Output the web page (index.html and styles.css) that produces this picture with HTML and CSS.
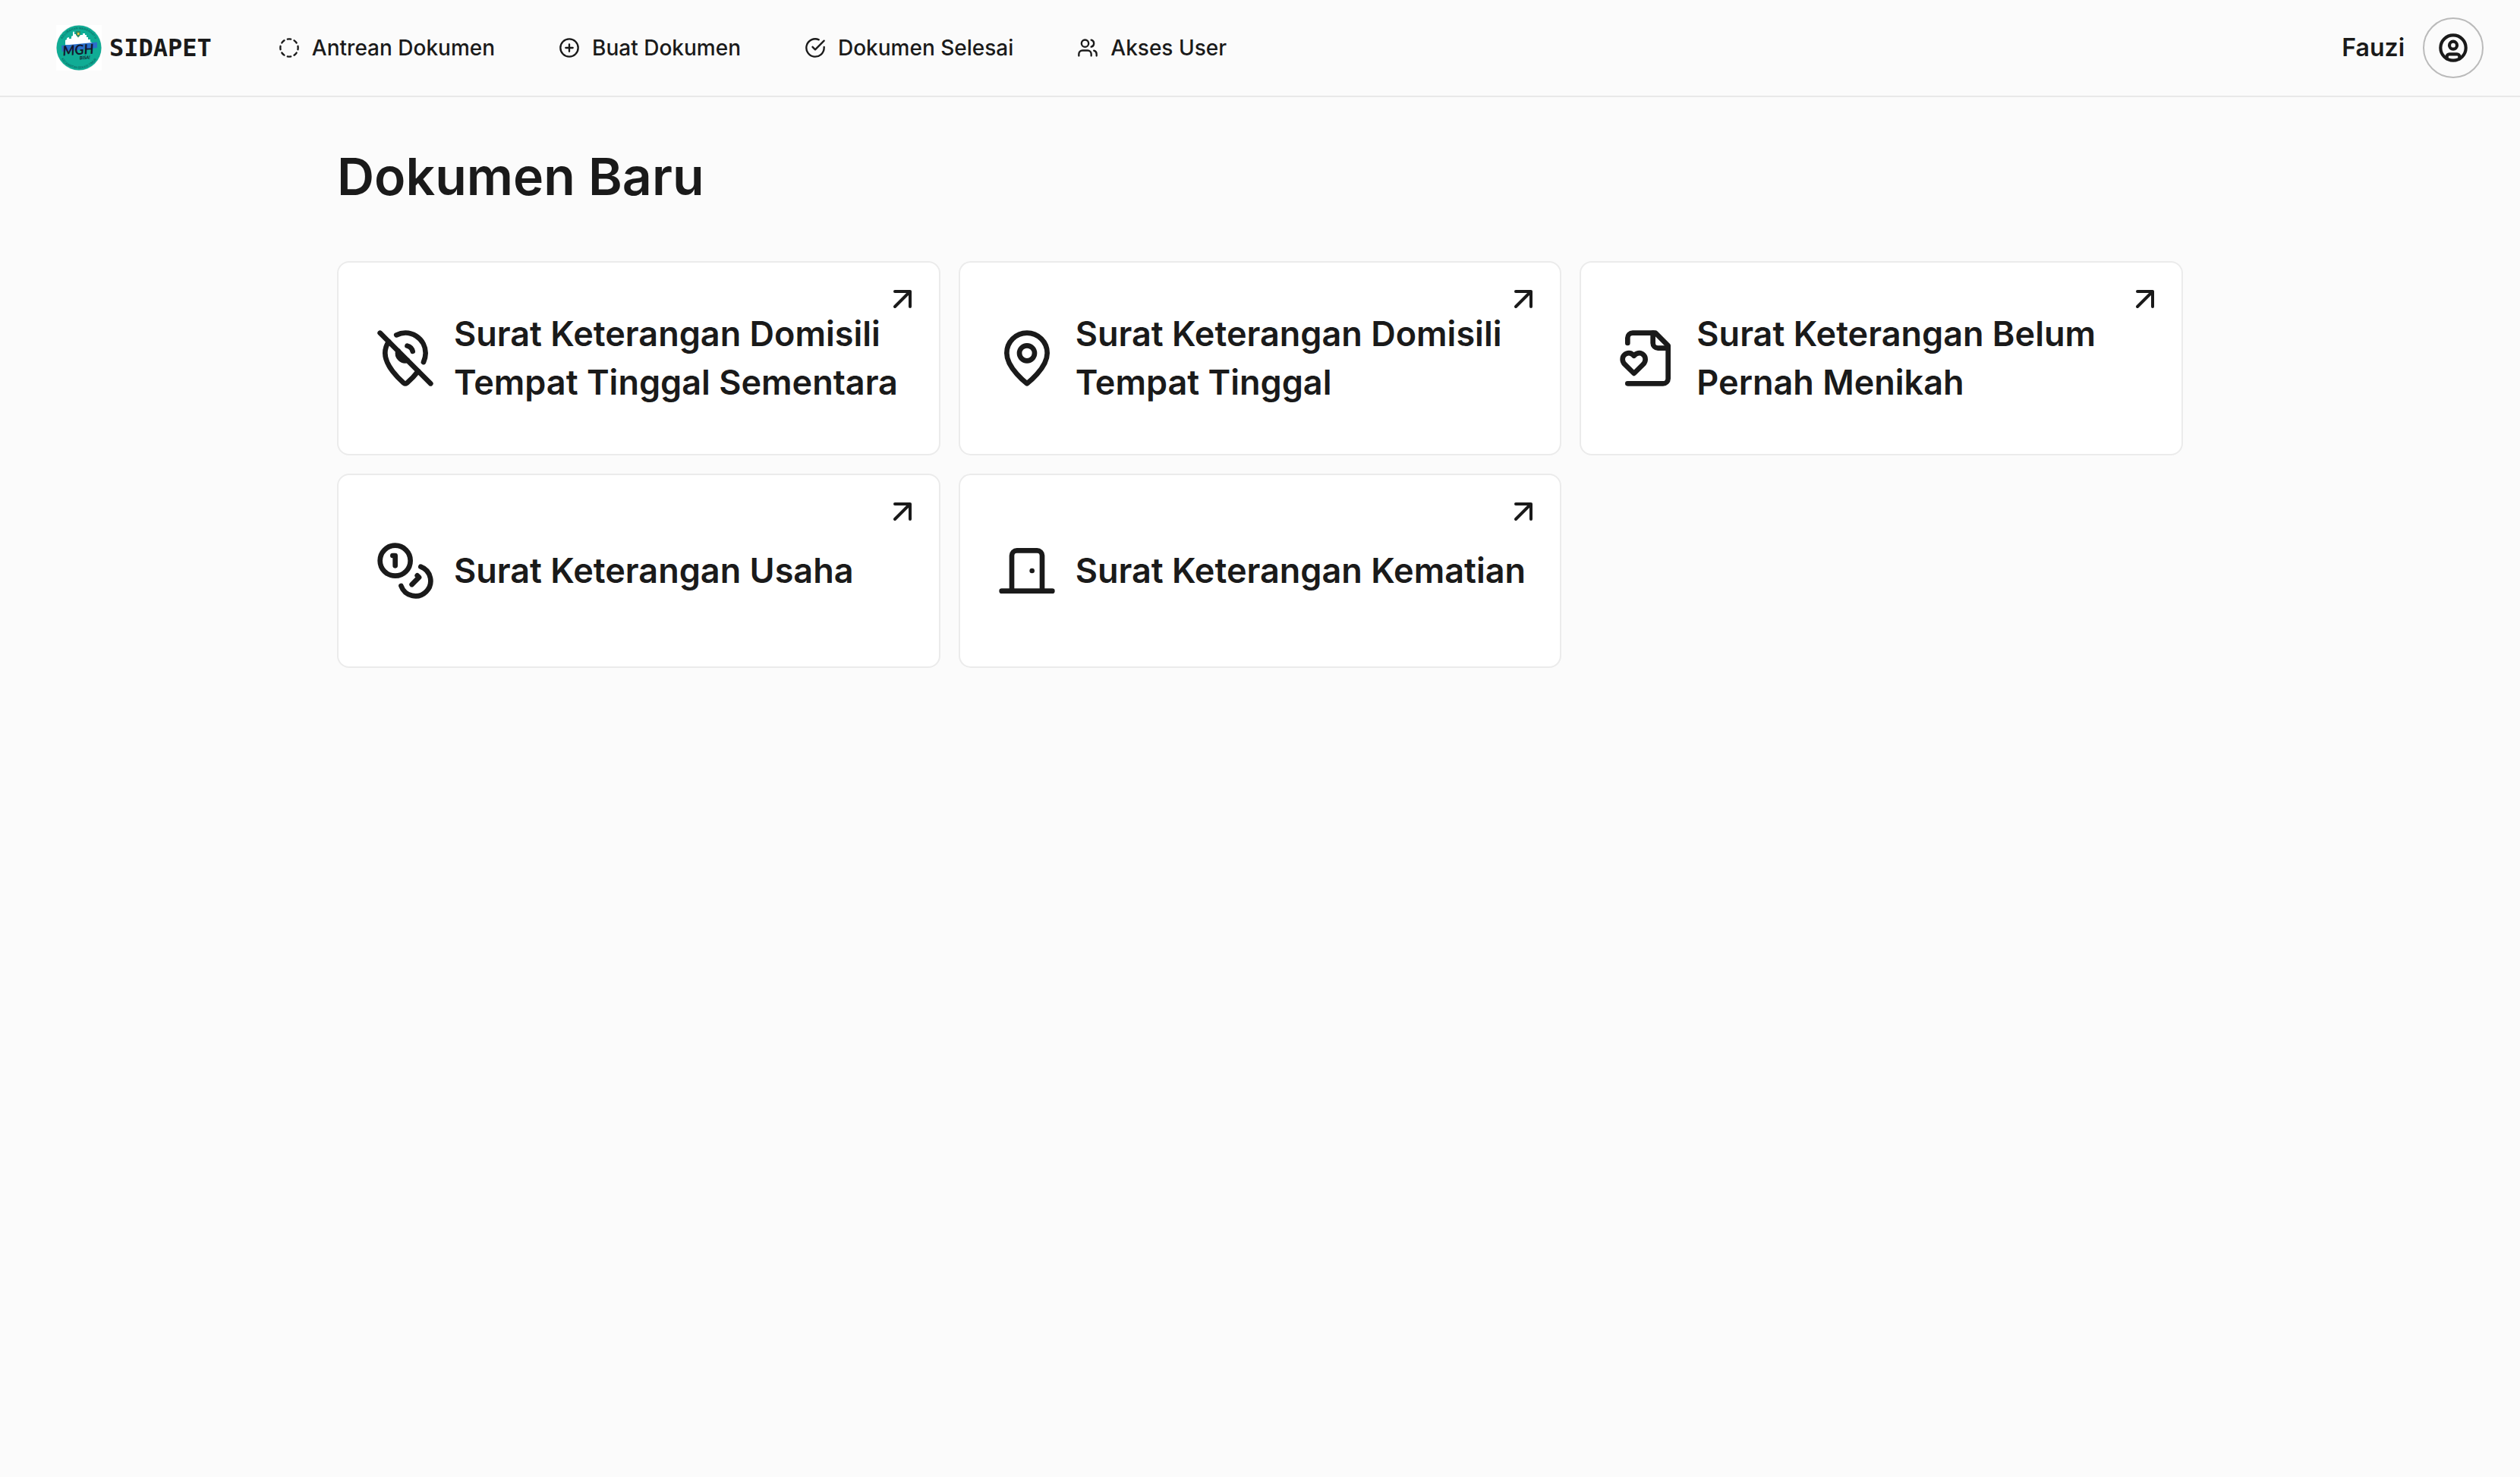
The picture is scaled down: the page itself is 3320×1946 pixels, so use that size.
FILE: index.html
```html
<!DOCTYPE html>
<html lang="id">
<head>
<meta charset="utf-8">
<meta name="viewport" content="width=device-width, initial-scale=1">
<title>SIDAPET - Dokumen Baru</title>
<link rel="stylesheet" href="styles.css">
</head>
<body>
<header class="topbar">
  <a class="brand" href="#">
    <svg class="brand-logo" viewBox="0 0 60 60" aria-hidden="true">
      <defs>
        <path id="ring-top" d="M5.500 30a24.500 24.500 0 0 1 49 0"/>
        <path id="ring-bottom" d="M2.500 30a27.500 27.500 0 0 0 55 0"/>
      </defs>
      <rect width="60" height="60" fill="#fff"/>
      <circle cx="30" cy="30" r="30" fill="#dfe9e7"/>
      <circle cx="30" cy="30" r="29.500" fill="#10ac95"/>
      <text class="logo-ring"><textPath href="#ring-top" startOffset="50%">KELURAHAN MARGAHAYU</textPath></text>
      <text class="logo-ring"><textPath href="#ring-bottom" startOffset="50%">KECAMATAN BEKASI TIMUR</textPath></text>
      <path d="M12 26v-6l2-1v-2l3-1v2h3v-3l2-1v-4l1-2 1 2v2h3v-1h5v2h3v-2h3v2h2v3h2v3h3v3l2 1v5z" fill="#fff"/>
      <path d="M26 8h6v5l-3 3.500-3-3.500z" fill="#2f8a63"/>
      <path d="M28 10h2.500v3H28z" fill="#e6c644"/>
      <path d="M7 27l47-4.500v7.500l-46 5z" fill="#2c6fc9"/>
      <text class="logo-name" x="29" y="39" transform="rotate(-4 29 34)">MGH</text>
      <text class="logo-sub" x="38" y="45" transform="rotate(-4 38 45)">BISA!</text>
    </svg>
    <span class="brand-name">SIDAPET</span>
  </a>
  <nav class="nav" aria-label="Menu utama">
    <a class="nav-link" href="#">
      <svg class="icon icon-sm" viewBox="0 0 24 24" aria-hidden="true"><path d="M10.100 2.182a10 10 0 0 1 3.800 0M13.900 21.818a10 10 0 0 1-3.800 0M17.609 3.721a10 10 0 0 1 2.690 2.700M2.182 13.900a10 10 0 0 1 0-3.800M20.279 17.609a10 10 0 0 1-2.700 2.690M21.818 10.100a10 10 0 0 1 0 3.800M3.721 6.391a10 10 0 0 1 2.700-2.690M6.391 20.279a10 10 0 0 1-2.690-2.700"/></svg>
      Antrean Dokumen
    </a>
    <a class="nav-link" href="#">
      <svg class="icon icon-sm" viewBox="0 0 24 24" aria-hidden="true"><circle cx="12" cy="12" r="10"/><path d="M8 12h8M12 8v8"/></svg>
      Buat Dokumen
    </a>
    <a class="nav-link" href="#">
      <svg class="icon icon-sm" viewBox="0 0 24 24" aria-hidden="true"><path d="M22 11.080V12a10 10 0 1 1-5.930-9.140"/><path d="m9 11 3 3L22 4"/></svg>
      Dokumen Selesai
    </a>
    <a class="nav-link" href="#">
      <svg class="icon icon-sm" viewBox="0 0 24 24" aria-hidden="true"><path d="M16 21v-2a4 4 0 0 0-4-4H6a4 4 0 0 0-4 4v2"/><circle cx="9" cy="7" r="4"/><path d="M22 21v-2a4 4 0 0 0-3-3.870M16 3.130a4 4 0 0 1 0 7.750"/></svg>
      Akses User
    </a>
  </nav>
  <div class="account">
    <span class="account-name">Fauzi</span>
    <button class="account-button" type="button" aria-label="Akun">
      <svg class="icon icon-md" viewBox="0 0 24 24" aria-hidden="true"><circle cx="12" cy="12" r="10"/><circle cx="12" cy="10" r="3"/><path d="M7 20.662V19a2 2 0 0 1 2-2h6a2 2 0 0 1 2 2v1.662"/></svg>
    </button>
  </div>
</header>
<main class="page">
  <h1 class="page-title">Dokumen Baru</h1>
  <div class="cards">
    <a class="card" href="#">
      <svg class="icon icon-xl" viewBox="0 0 24 24" aria-hidden="true"><path d="M12.750 7.090a3 3 0 0 1 2.160 2.160"/><path d="M17.072 17.072c-1.634 2.170-3.527 3.912-4.471 4.727a1 1 0 0 1-1.202 0C9.539 20.193 4 14.993 4 10a8 8 0 0 1 1.432-4.568"/><path d="m2 2 20 20"/><path d="M8.475 2.818A8 8 0 0 1 20 10c0 1.183-.310 2.377-.810 3.533"/><path d="M9.130 9.130a3 3 0 0 0 3.740 3.740"/></svg>
      <span class="card-title">Surat Keterangan Domisili Tempat Tinggal Sementara</span>
      <svg class="icon icon-lg card-arrow" viewBox="0 0 24 24" aria-hidden="true"><path d="M7 7h10v10M7 17 17 7"/></svg>
    </a>
    <a class="card" href="#">
      <svg class="icon icon-xl" viewBox="0 0 24 24" aria-hidden="true"><path d="M20 10c0 6-8 12-8 12s-8-6-8-12a8 8 0 0 1 16 0Z"/><circle cx="12" cy="10" r="3"/></svg>
      <span class="card-title">Surat Keterangan Domisili Tempat Tinggal</span>
      <svg class="icon icon-lg card-arrow" viewBox="0 0 24 24" aria-hidden="true"><path d="M7 7h10v10M7 17 17 7"/></svg>
    </a>
    <a class="card" href="#">
      <svg class="icon icon-xl" viewBox="0 0 24 24" aria-hidden="true"><path d="M4 22h14a2 2 0 0 0 2-2V7l-5-5H6a2 2 0 0 0-2 2v2"/><path d="M14 2v4a2 2 0 0 0 2 2h4"/><path d="M10.290 10.700a2.430 2.430 0 0 0-2.660-.520c-.290.120-.560.300-.780.530l-.350.340-.350-.340a2.430 2.430 0 0 0-2.650-.530c-.300.120-.560.300-.790.530-.950.940-1 2.530.200 3.740L6.500 18l3.600-3.550c1.200-1.210 1.140-2.800.190-3.740Z"/></svg>
      <span class="card-title">Surat Keterangan Belum Pernah Menikah</span>
      <svg class="icon icon-lg card-arrow" viewBox="0 0 24 24" aria-hidden="true"><path d="M7 7h10v10M7 17 17 7"/></svg>
    </a>
    <a class="card" href="#">
      <svg class="icon icon-xl" viewBox="0 0 24 24" aria-hidden="true"><circle cx="8" cy="8" r="6"/><path d="M18.090 10.370A6 6 0 1 1 10.340 18M7 6h1v4M16.710 13.880l.700.710-2.820 2.820"/></svg>
      <span class="card-title">Surat Keterangan Usaha</span>
      <svg class="icon icon-lg card-arrow" viewBox="0 0 24 24" aria-hidden="true"><path d="M7 7h10v10M7 17 17 7"/></svg>
    </a>
    <a class="card" href="#">
      <svg class="icon icon-xl" viewBox="0 0 24 24" aria-hidden="true"><path d="M18 20V6a2 2 0 0 0-2-2H8a2 2 0 0 0-2 2v14M2 20h20M14 12v.010"/></svg>
      <span class="card-title">Surat Keterangan Kematian</span>
      <svg class="icon icon-lg card-arrow" viewBox="0 0 24 24" aria-hidden="true"><path d="M7 7h10v10M7 17 17 7"/></svg>
    </a>
  </div>
</main>
</body>
</html>
```
FILE: styles.css
```css
* {
  box-sizing: border-box;
}

body {
  margin: 0;
  min-height: 100vh;
  background: #fbfbfb;
  color: #1a1a1a;
  font-family: Inter, "Liberation Sans", sans-serif;
}

a {
  color: inherit;
  text-decoration: none;
}

.icon {
  flex: none;
  fill: none;
  stroke: currentColor;
  stroke-width: 2;
  stroke-linecap: round;
  stroke-linejoin: round;
}

.icon-sm { width: 28px; height: 28px; }
.icon-md { width: 40px; height: 40px; stroke-width: 2.5; }
.icon-lg { width: 48px; height: 48px; }
.icon-xl { width: 80px; height: 80px; }

.topbar {
  display: flex;
  align-items: center;
  height: 128px;
  padding: 0 48px 0 74px;
  border-bottom: 2px solid #e8e8e8;
}

.brand {
  display: flex;
  align-items: center;
  gap: 10px;
  margin-right: 88px;
}

.brand-logo {
  width: 60px;
  height: 60px;
}

.brand-name {
  font: bold 32px/40px "DejaVu Sans Mono", monospace;
}

.logo-ring {
  fill: #0b7268;
  font: 600 4px Inter, sans-serif;
  text-anchor: middle;
}

.logo-name {
  fill: #14182e;
  font: italic 700 18px Lato, sans-serif;
  text-anchor: middle;
}

.logo-sub {
  fill: #14182e;
  font: italic 700 6px Lato, sans-serif;
  text-anchor: middle;
}

.nav {
  display: flex;
  gap: 84px;
}

.nav-link {
  display: flex;
  align-items: center;
  gap: 16px;
  font-size: 28px;
  font-weight: 500;
  line-height: 40px;
}

.account {
  display: flex;
  align-items: center;
  gap: 24px;
  margin-left: auto;
}

.account-name {
  font-size: 32px;
  font-weight: 600;
  line-height: 48px;
}

.account-button {
  display: flex;
  align-items: center;
  justify-content: center;
  width: 80px;
  height: 80px;
  padding: 0;
  border: 2px solid #bababa;
  border-radius: 50%;
  background: transparent;
  color: inherit;
}

.page {
  max-width: 2560px;
  margin: 0 auto;
  padding: 64px;
}

.page-title {
  margin: 0 0 72px;
  font-size: 68px;
  font-weight: 600;
  line-height: 80px;
}

.cards {
  display: grid;
  grid-template-columns: repeat(3, 1fr);
  gap: 24px;
}

.card {
  position: relative;
  display: flex;
  align-items: center;
  gap: 24px;
  min-height: 256px;
  padding: 48px 24px 48px 48px;
  border: 2px solid #ebebeb;
  border-radius: 16px;
  background: #fff;
}

.card-title {
  font-size: 45px;
  font-weight: 600;
  line-height: 64px;
}

.card-arrow {
  position: absolute;
  top: 24px;
  right: 24px;
}
```
